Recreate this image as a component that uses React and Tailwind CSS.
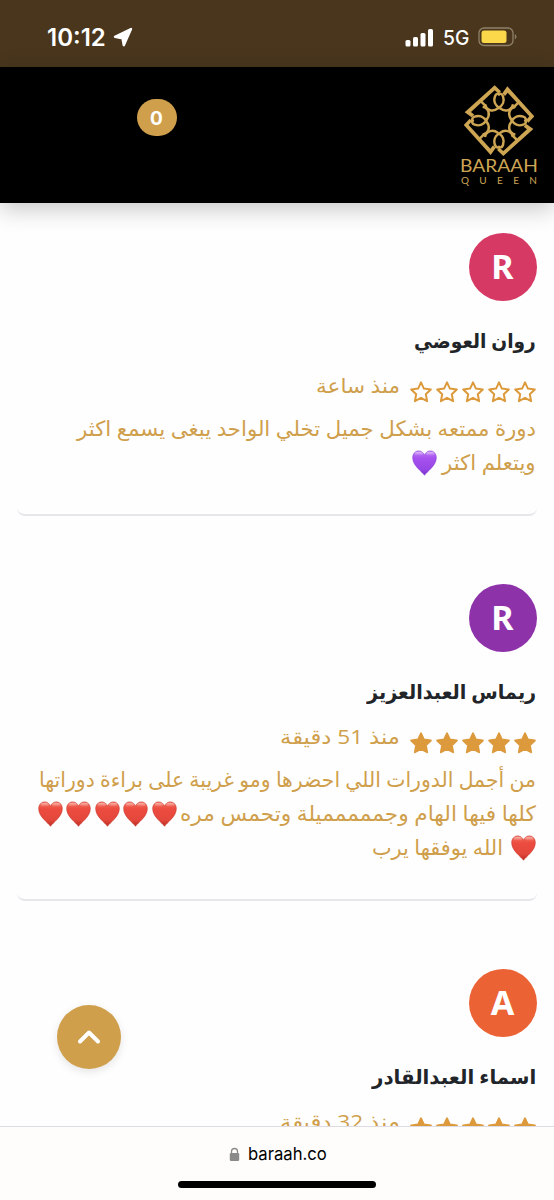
import { useLayoutEffect, useRef, useState } from "react";

function Fit({ w, children, className = "", rtl = true }) {
  const ref = useRef(null);
  const [s, setS] = useState(1);
  useLayoutEffect(() => {
    setS(w / ref.current.offsetWidth);
  }, [w]);
  return (
    <span className={"flex shrink-0 " + className} style={{ width: w }}>
      <span
        ref={ref}
        className={"inline-block shrink-0 whitespace-nowrap " + (rtl ? "origin-right" : "origin-left")}
        style={{ transform: `scaleX(${s})` }}
      >
        {children}
      </span>
    </span>
  );
}

function Heart({ purple }) {
  const id = purple ? "heartPurple" : "heartRed";
  return (
    <svg viewBox="0 0 26 26" className="mt-px h-[26px] w-[25px] shrink-0" preserveAspectRatio="none">
      <defs>
        <linearGradient id={id} x1="0" y1="0" x2="0" y2="1">
          <stop offset="0" stopColor={purple ? "#c07bf5" : "#f4705f"} />
          <stop offset="0.3" stopColor={purple ? "#a552ee" : "#ec4c3f"} />
          <stop offset="0.75" stopColor={purple ? "#9747e6" : "#e3473b"} />
          <stop offset="1" stopColor={purple ? "#7a2fca" : "#b92a20"} />
        </linearGradient>
        <linearGradient id={id + "Gloss"} x1="0" y1="0" x2="0" y2="1">
          <stop offset="0" stopColor="#fff" stopOpacity="0.5" />
          <stop offset="1" stopColor="#fff" stopOpacity="0" />
        </linearGradient>
      </defs>
      <path
        d="M13 25.3C10.500 21.500 0.700 15.800 0.700 7.700C0.700 3.600 3.500 0.900 6.900 0.900C9.700 0.900 12 2.500 13 5.200C14 2.500 16.300 0.900 19.100 0.900C22.500 0.900 25.300 3.600 25.300 7.700C25.300 15.800 15.500 21.500 13 25.300Z"
        fill={`url(#${id})`}
        stroke={purple ? "#8b3fd6" : "#c9362b"}
        strokeWidth="0.6"
      />
      <ellipse cx="7" cy="3.800" rx="4.300" ry="2" fill={`url(#${id}Gloss)`} />
      <ellipse cx="19" cy="3.800" rx="4.300" ry="2" fill={`url(#${id}Gloss)`} />
    </svg>
  );
}

function Star({ filled }) {
  return (
    <svg viewBox="0 0 24 24" className="h-6 w-6 shrink-0">
      <path
        d="M12 2.400L14.900 8.600L21.800 9.500L16.800 14.300L18.100 21.200L12 17.800L5.900 21.200L7.200 14.300L2.200 9.500L9.100 8.600Z"
        fill={filled ? "#dc9a3c" : "none"}
        stroke="#dc9a3c"
        strokeWidth="2"
        strokeLinejoin="round"
      />
    </svg>
  );
}

function Review({ letter, color, name, nameW, filled, time, timeW, children, className }) {
  return (
    <article className={"mx-[17px] flex shrink-0 flex-col rounded-lg border-b-2 border-[#e6e7ea] " + className}>
      <div
        className={
          "flex h-[68px] w-[68px] shrink-0 items-center justify-center rounded-full pb-px pl-0.5 pr-[3px] font-['Noto_Sans'] text-[34px] font-bold text-white " +
          color
        }
      >
        {letter}
      </div>
      <Fit w={nameW} className="mr-px mt-[23px] h-[34px] text-[20px] font-bold leading-[34px] text-[#212529]">
        {name}
      </Fit>
      <div className="mt-[11px] flex h-[34px] shrink-0">
        <div className="flex gap-0.5 pt-[11px]">
          {[0, 1, 2, 3, 4].map((i) => (
            <Star key={i} filled={filled} />
          ))}
        </div>
        <Fit w={timeW} className="mr-[9px] h-[34px] text-[20px] leading-[34px]">
          {time}
        </Fit>
      </div>
      <div className="mr-px mt-[8px] flex flex-col text-[21px] leading-[34px]">{children}</div>
    </article>
  );
}

function LogoQuarter() {
  return (
    <g>
      <path d="M66 112L156 31L175 49L168 56L156 46L85 111L95 119L87 127Z" fill="#cda553" />
      <g fill="none" stroke="#cda553" strokeWidth="7.500">
        <path d="M112 76L131 95" />
        <path d="M127 88C131 108 152 111 166 100C181 92 186 78 181 64C178 56 172 54 166 60" />
        <path d="M127 88C131 108 152 111 166 100C181 92 186 78 181 64C178 56 172 54 166 60" transform="matrix(0 1 1 0 32 -32)" />
      </g>
    </g>
  );
}

function Logo() {
  return (
    <div className="mt-[18px] flex w-[78px] flex-col items-center text-[#cda553]">
      <svg viewBox="64 30 210 213" className="h-[71px] w-[70px]">
        {[0, 90, 180, 270].map((a) => (
          <g key={a} transform={`rotate(${a} 169 137)`}>
            <LogoQuarter />
          </g>
        ))}
      </svg>
      <Fit rtl={false} w={78} className="h-[18px] font-['Lato'] text-[18px] leading-[18px]">BARAAH</Fit>
      <div className="mt-px flex h-[11px] w-[76px] justify-between font-['Lato'] text-[10px] leading-[11px]">
        {["Q", "U", "E", "E", "N"].map((c, i) => (
          <span key={i}>{c}</span>
        ))}
      </div>
    </div>
  );
}

export default function App() {
  return (
    <div
      dir="rtl"
      className="relative flex h-[1200px] w-[554px] flex-col overflow-hidden bg-[#fefefe] font-['Open_Sans','DejaVu_Sans',sans-serif] text-[#cf9f4c]"
    >
      <div dir="ltr" className="flex h-[67px] shrink-0 items-start justify-between bg-[#49361d] pl-[47px] pr-[37px] pt-[22px] text-white">
        <div className="flex h-[30px] items-center gap-[7px]">
          <Fit rtl={false} w={59} className="pt-px font-['Inter'] text-[24px] font-semibold leading-[30px]">10:12</Fit>
          <svg viewBox="0 0 20 20" className="h-5 w-5">
            <path d="M18 2L10.800 18.200L9.500 11.200L2 9.800Z" fill="#fff" stroke="#fff" strokeWidth="2.400" strokeLinejoin="round" />
          </svg>
        </div>
        <div className="flex h-[30px] items-center gap-[9px]">
          <svg viewBox="0 0 29 19" className="h-[19px] w-[29px]" fill="#fff">
            <rect x="0.500" y="12" width="5" height="6.500" rx="1.500" />
            <rect x="8" y="9" width="5" height="9.500" rx="1.500" />
            <rect x="15.500" y="5" width="5" height="13.500" rx="1.500" />
            <rect x="23" y="1" width="5" height="17.500" rx="1.500" />
          </svg>
          <Fit rtl={false} w={26} className="pt-px font-['Inter'] text-[20px] font-medium leading-[30px]">5G</Fit>
          <svg viewBox="0 0 39 20" className="h-5 w-[39px]">
            <rect x="1" y="1" width="34" height="17.500" rx="5" fill="none" stroke="#8f8168" strokeWidth="1.300" />
            <rect x="3.500" y="3.500" width="25" height="12.500" rx="2.500" fill="#fbd84a" />
            <path d="M36.800 7V12.500Q38.500 11.500 38.500 9.700Q38.500 8 36.800 7Z" fill="#8f8168" />
          </svg>
        </div>
      </div>

      <header
        dir="ltr"
        className="z-10 flex h-[136px] shrink-0 items-start justify-between bg-black pl-[137px] pr-4 shadow-[0_6px_22px_rgba(0,0,0,0.22)]"
      >
        <span className="mt-8 flex h-[37px] w-10 items-center justify-center rounded-[19px] bg-[#cf9f4c] pr-px pt-[3px] font-['Inter'] text-[19px] font-bold text-white">
          0
        </span>
        <Logo />
      </header>

      <main className="flex min-h-0 flex-1 flex-col overflow-hidden pt-[30px]">
        <Review className="h-[283px]" letter="R" color="bg-[#d63964]" name="روان العوضي" nameW={122} time="منذ ساعة" timeW={84}>
          <Fit w={459}>دورة ممتعه بشكل جميل تخلي الواحد يبغى يسمع اكثر</Fit>
          <div className="flex items-center gap-[5px]">
            <Fit w={94}>ويتعلم اكثر</Fit>
            <Heart purple />
          </div>
        </Review>
        <Review className="mt-[68px] h-[317px]" letter="R" color="bg-[#8e32aa]" name="ريماس العبدالعزيز" nameW={169} filled time="منذ 51 دقيقة" timeW={120}>
          <Fit w={497}>من أجمل الدورات اللي احضرها ومو غريبة على براءة دوراتها</Fit>
          <div className="flex items-center gap-[3.400px]">
            <Fit w={356}>كلها فيها الهام وجممممميلة وتحمس مره</Fit>
            {[0, 1, 2, 3, 4].map((i) => (
              <Heart key={i} />
            ))}
          </div>
          <div className="flex items-center gap-[8px]">
            <Heart />
            <Fit w={131}>الله يوفقها يرب</Fit>
          </div>
        </Review>
        <Review className="mt-[68px] h-[283px]" letter="A" color="bg-[#eb6335]" name="اسماء العبدالقادر" nameW={164} filled time="منذ 32 دقيقة" timeW={120} />
      </main>

      <footer className="z-10 flex h-[74px] shrink-0 flex-col items-center border-t border-[#dcdce2] bg-[#fefdfc]">
        <div dir="ltr" className="mt-[13px] flex h-[28px] items-center gap-[8px] pl-[2px]">
          <svg viewBox="0 0 11 15" className="h-[15px] w-[11px]">
            <path d="M2.500 7V4.500a3 3 0 0 1 6 0V7" fill="none" stroke="#8a8a8a" strokeWidth="1.300" />
            <rect x="0.800" y="6" width="9.400" height="8" rx="1.300" fill="#8a8a8a" />
          </svg>
          <Fit rtl={false} w={79} className="font-['Inter'] text-[17.500px] leading-[28px] text-black">baraah.co</Fit>
        </div>
        <div className="mt-[13px] h-[7px] w-[198px] rounded-full bg-black" />
      </footer>

      <button className="absolute left-[57px] top-[1005px] z-10 flex h-16 w-16 items-center justify-center rounded-full bg-[#cf9f4c] shadow-[0_3px_8px_rgba(0,0,0,0.1)]">
        <svg viewBox="0 0 24 16" className="h-4 w-6">
          <path d="M3 12.500L12 3.500L21 12.500" fill="none" stroke="#fff" strokeWidth="4" strokeLinecap="round" strokeLinejoin="round" />
        </svg>
      </button>
    </div>
  );
}
